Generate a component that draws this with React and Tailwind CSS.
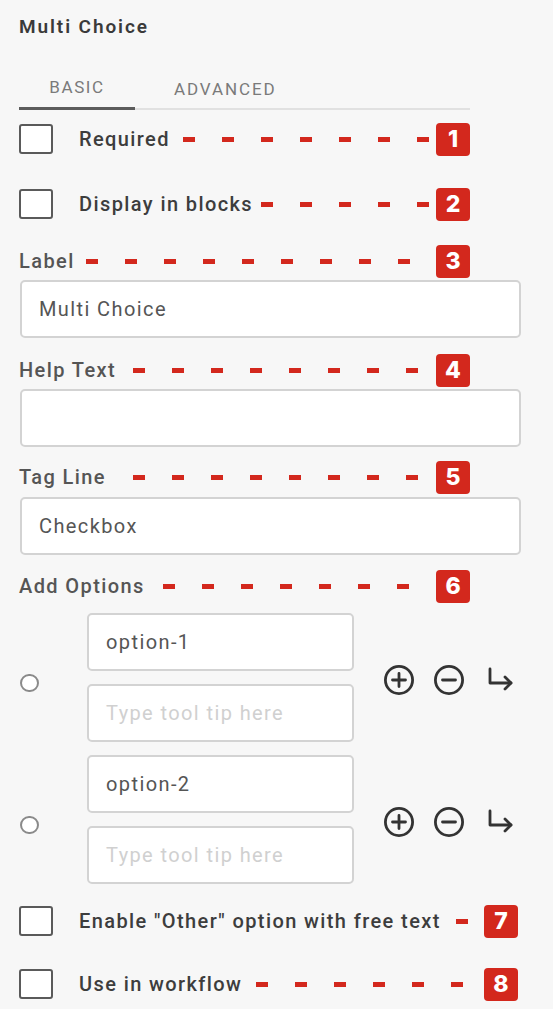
import React from 'react'

// numbered red callout badge
function Badge({ n }) {
  return (
    <div className="w-[34px] h-[33px] shrink-0 rounded-[4px] bg-[#d3281d] text-white flex items-center justify-center font-['Inter',sans-serif] font-extrabold text-[23px] leading-none">
      {n}
    </div>
  )
}

// red dashed leader line, drawn as separate dashes
function Dashes({ count, className = '' }) {
  return (
    <div className={`ml-auto flex gap-[27px] ${className}`}>
      {Array.from({ length: count }).map((_, i) => (
        <span key={i} className="block w-[12px] h-[5px] bg-[#d3281d]" />
      ))}
    </div>
  )
}

function Checkbox() {
  return <div className="w-[34px] h-[30px] shrink-0 rounded-[3px] border-2 border-[#5a5a5a] bg-white" />
}

function CheckRow({ label, dashes, gapClass, n, className = '' }) {
  return (
    <div className={`flex items-center h-[34px] ${className}`}>
      <Checkbox />
      <span className="ml-[26px] text-[20px] font-medium tracking-[1.4px] text-[#3d3d3d] whitespace-nowrap">{label}</span>
      <Dashes count={dashes} className={gapClass} />
      <Badge n={n} />
    </div>
  )
}

function LabelRow({ label, dashes, gapClass, n, className = '' }) {
  return (
    <div className={`flex items-center h-[34px] w-[451px] ${className}`}>
      <span className="text-[20px] font-medium tracking-[1.4px] text-[#555] whitespace-nowrap">{label}</span>
      <Dashes count={dashes} className={gapClass} />
      <Badge n={n} />
    </div>
  )
}

function TextBox({ value, placeholder, className = '' }) {
  return (
    <div className={`h-[58px] rounded-[5px] border-2 border-[#d3d3d3] bg-white flex items-center pl-[17px] text-[20px] tracking-[1.4px] ${className}`}>
      {value ? <span className="text-[#555]">{value}</span> : <span className="text-[#d0d0d0]">{placeholder}</span>}
    </div>
  )
}

function PlusCircle() {
  return (
    <svg width="32" height="32" viewBox="0 0 32 32" fill="none" stroke="#333" strokeWidth="2.8" strokeLinecap="round">
      <circle cx="16" cy="16" r="13.6" />
      <path d="M16 9.5v13M9.5 16h13" />
    </svg>
  )
}

function MinusCircle() {
  return (
    <svg width="32" height="32" viewBox="0 0 32 32" fill="none" stroke="#333" strokeWidth="2.8" strokeLinecap="round">
      <circle cx="16" cy="16" r="13.6" />
      <path d="M9.5 16h13" />
    </svg>
  )
}

function SubArrow() {
  return (
    <svg width="27" height="25" viewBox="0 0 27 25" fill="none" stroke="#333" strokeWidth="2.8" strokeLinecap="round" strokeLinejoin="round">
      <path d="M3 2v14h21" />
      <path d="M18 10l6 6-6 6" />
    </svg>
  )
}

function OptionGroup({ value, className = '' }) {
  return (
    <div className={`flex items-center ${className}`}>
      <div className="w-[68px] shrink-0">
        <div className="ml-[1px] mt-[10px] w-[19px] h-[18px] rounded-full border-2 border-[#8a8a8a] bg-white" />
      </div>
      <div className="w-[267px] flex flex-col gap-[13px]">
        <TextBox value={value} />
        <TextBox placeholder="Type tool tip here" />
      </div>
      <div className="ml-[29px] mt-[4px] flex items-center">
        <PlusCircle />
        <div className="ml-[18px]"><MinusCircle /></div>
        <div className="ml-[22px]"><SubArrow /></div>
      </div>
    </div>
  )
}

export default function App() {
  return (
    <div className="min-h-screen bg-[#f7f7f7] px-[19px] font-['Roboto',sans-serif]">
      <div className="h-[66px] pt-[14px]">
        <div className="leading-[26px] text-[19px] font-semibold tracking-[1.9px] text-[#3a3a3a]">Multi Choice</div>
      </div>

      <div className="w-[451px] h-[44px] flex items-end border-b-2 border-[#e1e1e1]">
        <div className="w-[116px] h-[44px] -mb-[2px] pt-[3px] border-b-[3px] border-[#5c5c5c] flex items-center justify-center text-[17px] tracking-[1.6px] text-[#7a7a7a]">
          BASIC
        </div>
        <div className="h-[44px] -mb-[2px] pt-[3px] pl-[39px] flex items-center text-[17px] tracking-[1.9px] text-[#7a7a7a]">
          ADVANCED
        </div>
      </div>

      <CheckRow className="mt-[12px] w-[451px]" label="Required" dashes={7} gapClass="mr-[7px]" n="1" />
      <CheckRow className="mt-[31px] w-[451px]" label="Display in blocks" dashes={5} gapClass="mr-[7px]" n="2" />

      <LabelRow className="mt-[23px]" label="Label" dashes={9} gapClass="mr-[26px]" n="3" />
      <TextBox className="mt-[2px] ml-[1px] w-[501px]" value="Multi Choice" />

      <LabelRow className="mt-[15px]" label="Help Text" dashes={8} gapClass="mr-[18px]" n="4" />
      <TextBox className="mt-[2px] ml-[1px] w-[501px]" value="" placeholder="" />

      <LabelRow className="mt-[13px]" label="Tag Line" dashes={8} gapClass="mr-[18px]" n="5" />
      <TextBox className="mt-[3px] ml-[1px] w-[501px]" value="Checkbox" />

      <LabelRow className="mt-[14px]" label="Add Options" dashes={7} gapClass="mr-[27px]" n="6" />

      <div className="mt-[10px] flex flex-col gap-[13px]">
        <OptionGroup value="option-1" />
        <OptionGroup value="option-2" />
      </div>

      <CheckRow className="mt-[20px] w-[499px]" label={'Enable "Other" option with free text'} dashes={1} gapClass="mr-[16px]" n="7" />
      <CheckRow className="mt-[29px] w-[499px]" label="Use in workflow" dashes={6} gapClass="mr-[21px]" n="8" />
    </div>
  )
}
